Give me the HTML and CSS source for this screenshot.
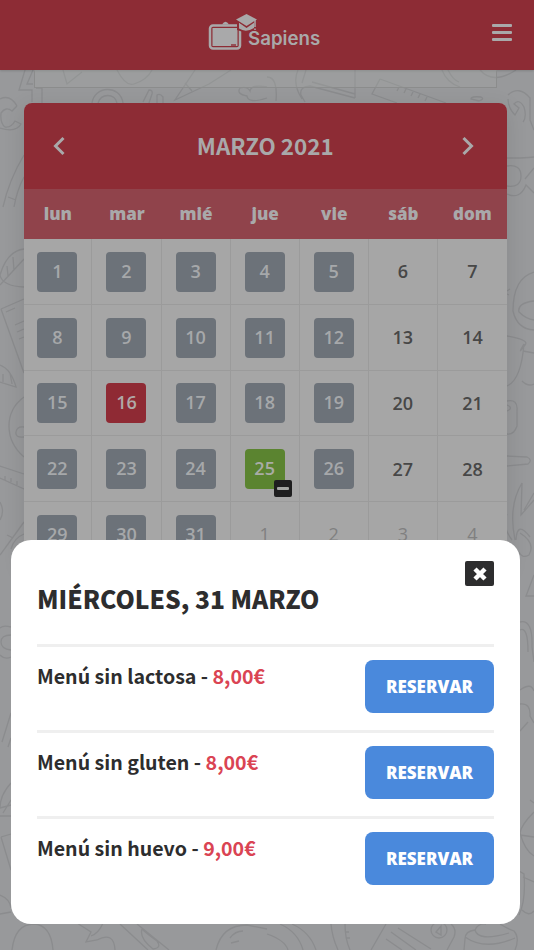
FILE: index.html
```html
<!DOCTYPE html>
<html lang="es">
<head>
  <meta charset="UTF-8">
  <meta name="viewport" content="width=device-width, initial-scale=1">
  <title>Sapiens - Calendario</title>
  <link rel="stylesheet" href="styles.css">
</head>
<body>

  <!-- fondo escolar -->
  <svg class="doodles" width="534" height="950" viewBox="0 0 534 950" aria-hidden="true">
    <path d="M25 70L19 90H32V102M33 70L27 84H33M36 88H42V103M63 70L67 84L82 72M117 70Q126 87 134 84Q147 80 152 70M92 103C94 86 120 84 123 103M98 103C101 93 115 93 117 103M143 102L149 90Q153 90 152 94L149 103M157 103V95Q160 93 163 97V103M195 70L175 100L209 84L231 70M185 83L192 91M267 98Q248 104 247 96Q236 94 240 88Q247 86 250 91Q251 84 267 87"/>
    <path d="M267 77Q278 77 276 101M298 70Q292 83 302 99M306 70L302 83M355 70V98M355 98L310 86Q299 87 301 95L305 102M355 94L312 82M380 79L446 103M380 79L372 94L397 103M388 88v.1M397 91l2-4M404 93l2-4M411 96l2-4M418 98l2-4M425 101l2-4M442 70Q447 83 460 87M448 70Q453 80 459 82M480 70Q493 85 516 70M471 99Q471 96 481 97Q485 99 479 101Z"/>
    <path d="M17 106Q10 94 0 99M17 106L12 111Q6 106 1 113Q0 123 5 127Q11 128 15 121L21 124Q16 133 0 128M24 155Q9 180 3 207M24 177Q17 190 14 207M8 197L16 200"/>
    <path d="M24 249Q7 251 0 275Q2 286 24 287M0 285L24 259M7 266L8 276M13 257L14 270M1 309L24 299M1 309L24 373M6 312L15 308M15 325L24 321M17 332L24 329M19 339L24 337M0 365Q11 369 16 387L0 382M3 374V382M10 373L12 384M24 397Q9 408 9 426T24 457M24 427Q17 426 16 432T24 437M0 466L24 474M0 478L24 489M5 480v-4M11 482v-4M17 485v-4M0 502Q5 511 0 520M24 522L0 555M13 538L7 535M24 534Q14 538 11 549"/>
    <path d="M508 95Q519 85 530 98V120L534 130M508 99Q508 108 515 115L519 108L514 104Q519 98 524 107Q527 117 523 122M507 158H517Q523 158 534 157M507 166Q521 164 521 176T507 186M507 194Q520 200 526 185L534 193M525 179L534 168M507 291l3-2M507 294l2 1M534 272Q513 278 513 311Q517 329 534 330M534 301Q517 303 519 312Q526 319 534 320M507 336Q530 340 525 345Q516 357 524 344Q521 380 507 386M523 351L534 353M522 381Q528 387 534 384M507 401Q518 399 517 410V426Q514 435 507 434M507 405Q514 408 507 411M507 456L527 457Q533 460 528 464L507 466M522 483Q508 506 515 540M522 483L521 515L534 500M524 510L534 493M516 540Q517 520 530 537M512 540Q501 525 507 514"/>
    <path d="M520 533Q536 543 529 555Q522 559 519 552M534 575L526 596H534M520 622Q533 619 532 647L534 662M520 630Q528 626 528 652M520 690Q531 682 534 691M520 704Q531 703 530 716L534 723M528 722L520 731M0 628Q3 625 11 627M11 635Q1 635 1 642T11 650M0 655Q5 660 11 657M11 713L2 742M11 738L8 747M11 783Q0 795 0 808L11 805M0 816H11M11 800L3 813M1 837L11 834M1 837L11 870M0 895Q10 899 11 908M0 914L11 912"/>
    <path d="M12 950Q15 924 34 924Q51 925 53 950M77 923L91 932L86 942L97 940Q114 931 115 950M103 923Q99 933 91 936M120 924L148 950M137 924L169 950M142 929Q139 938 153 949Q162 948 157 941Q146 933 142 929M216 950Q222 925 247 925L267 929M230 938Q235 931 243 931M231 943L239 941"/>
    <path d="M267 934Q285 940 288 950M280 924Q298 932 303 950M292 924Q310 932 316 950M331 924Q332 937 338 950M345 924Q345 939 350 950M345 932h4M346 938h4M386 924L371 950M398 928L431 949M391 932L416 950M386 939L402 950M451 924Q457 929 454 937L447 950M431 930A8 8 0 1 0 447 930A8 8 0 1 0 431 930M436 932L441 926L441 935ZM464 950L465 939Q465 931 475 930Q478 923 486 924M500 924Q508 929 514 931Q520 938 515 950M465 937Q485 951 515 938M475 930Q478 942 509 933M530 800L534 803M534 812Q521 825 520 833Q525 851 534 856M520 835L534 837M519 871L524 874Q526 901 519 915M523 877L534 882M522 910Q529 917 534 911"/>
  </svg>

  <header class="topbar">
    <div class="brand">
      <svg class="brand-icon" width="52" height="40" viewBox="0 0 52 40">
        <rect x="2" y="13.500" width="30" height="23" rx="3" fill="none" stroke="#a9a9aa" stroke-width="2.500"/>
        <rect x="4.500" y="16" width="25" height="18" fill="#a9a9aa"/>
        <path d="M14 12.500Q17.500 7 21 12.500Z" fill="#a9a9aa"/>
        <path d="M23 33H28" stroke="#8d2c35" stroke-width="1.4"/>
        <path class="cap-edge" d="M29 10V18L35 20V10Z"/>
        <path d="M31 10.500V16.500Q38 21 46 16V10L38.500 15Z" fill="#a9a9aa"/>
        <path class="cap-edge" d="M28 8.500L38.500 16L49 8.500Z"/>
        <path d="M28 7.500L38.500 2L49 7.500L38.500 14Z" fill="#a9a9aa"/>
        <path d="M47 8V15M47 16.500V18" stroke="#a9a9aa" stroke-width="1.5"/>
      </svg>
      <span class="brand-name">Sapiens</span>
    </div>
    <div class="menu-btn">
      <span></span>
      <span></span>
      <span></span>
    </div>
  </header>

  <main>
    <div class="prev-card"></div>

    <section class="calendar">
      <div class="month">
        <svg width="14" height="20" viewBox="0 0 14 20"><path d="M11.500 2L3.500 10L11.500 18"/></svg>
        <h1>MARZO 2021</h1>
        <svg width="14" height="20" viewBox="0 0 14 20"><path d="M2.500 2L10.500 10L2.500 18"/></svg>
      </div>
      <div class="grid weekdays">
        <span>lun</span><span>mar</span><span>mié</span><span>jue</span><span>vie</span><span>sáb</span><span>dom</span>
      </div>
      <div class="grid days">
        <div><b>1</b></div><div><b>2</b></div><div><b>3</b></div><div><b>4</b></div><div><b>5</b></div><div>6</div><div>7</div>
        <div><b>8</b></div><div><b>9</b></div><div><b>10</b></div><div><b>11</b></div><div><b>12</b></div><div>13</div><div>14</div>
        <div><b>15</b></div><div><b class="today">16</b></div><div><b>17</b></div><div><b>18</b></div><div><b>19</b></div><div>20</div><div>21</div>
        <div><b>22</b></div><div><b>23</b></div><div><b>24</b></div><div><b class="booked">25<i class="badge"></i></b></div><div><b>26</b></div><div>27</div><div>28</div>
        <div><b>29</b></div><div><b>30</b></div><div><b>31</b></div><div class="other">1</div><div class="other">2</div><div class="other">3</div><div class="other">4</div>
      </div>
    </section>
  </main>

  <!-- ventana de reserva -->
  <div class="modal">
    <div class="close">
      <svg width="16" height="16" viewBox="0 0 16 16"><path d="M3 3L13 13M13 3L3 13"/></svg>
    </div>
    <h2>MIÉRCOLES, 31 MARZO</h2>
    <div class="option">
      <p>Menú sin lactosa - <span class="price">8,00€</span></p>
      <button>RESERVAR</button>
    </div>
    <div class="option">
      <p>Menú sin gluten - <span class="price">8,00€</span></p>
      <button>RESERVAR</button>
    </div>
    <div class="option">
      <p>Menú sin huevo - <span class="price">9,00€</span></p>
      <button>RESERVAR</button>
    </div>
  </div>

</body>
</html>
```
FILE: styles.css
```css
* {
  box-sizing: border-box;
}
body {
  margin: 0;
  height: 950px;
  overflow: hidden;
  position: relative;
  background-color: #98999b;
  font-family: "Open Sans", sans-serif;
}
.doodles {
  position: absolute;
  top: 0;
  left: 0;
  fill: none;
  stroke: #8b8c8e;
  stroke-width: 1.3;
}
.topbar {
  position: relative;
  height: 70px;
  background-color: #8d2c35;
  display: flex;
  align-items: center;
  justify-content: center;
  box-shadow: 0 1px 2px rgba(0, 0, 0, 0.15);
}
.brand {
  display: flex;
  width: 112px;
  height: 40px;
  margin-right: 6px;
  margin-bottom: 6px;
}
.brand-icon {
  flex: none;
}
.cap-edge {
  fill: #8d2c35;
}
.brand-name {
  margin: 15px 0 0 -12px;
  color: #a9a9aa;
  font: 600 18.7px/24px Inter, sans-serif;
}
.menu-btn {
  position: absolute;
  top: 24px;
  right: 22px;
  width: 20px;
  display: grid;
  gap: 4px;
}
.menu-btn span {
  height: 3px;
  border-radius: 1px;
  background-color: #a9a9aa;
}
.prev-card {
  position: relative;
  width: 463px;
  height: 18px;
  margin-left: 34px;
  background-color: rgba(166, 170, 164, 0.3);
  border: 1px solid #8b8c8c;
  border-top: 0;
}
.calendar {
  position: relative;
  width: 482.5px;
  margin: 15px 0 0 24px;
  background-color: #a6a6a6;
  border-radius: 8px 8px 0 0;
  overflow: hidden;
  box-shadow: 0 5px 22px rgba(0, 0, 0, 0.11);
}
.month {
  height: 86px;
  padding: 0 32px 0 28px;
  background-color: #8d2c35;
  display: flex;
  align-items: center;
  justify-content: space-between;
}
.month h1 {
  margin: 0 0 2px 4px;
  color: #a9a9aa;
  font: 700 22.4px/30px "Noto Sans CJK SC", sans-serif;
}
.month svg {
  fill: none;
  stroke: #a9a9aa;
  stroke-width: 3;
}
.grid {
  display: grid;
  grid-template-columns: repeat(7, 69.1px);
  margin-left: -0.7px;
}
.weekdays {
  height: 50px;
  background-color: #90434b;
  color: #a9a9aa;
  font-size: 17px;
  font-weight: 800;
  line-height: 50px;
  text-align: center;
}
.days {
  grid-auto-rows: 65.75px;
}
.days div {
  display: flex;
  align-items: center;
  justify-content: center;
  border-right: 1px solid #9b9b9b;
  border-bottom: 1px solid #9b9b9b;
  color: #474747;
  font-size: 18px;
  font-weight: 600;
}
.days div:nth-child(7n) {
  border-right: 0;
}
.days .other {
  color: #808080;
  font-weight: 400;
}
.days b {
  position: relative;
  width: 40px;
  height: 40px;
  margin-top: 1px;
  border-radius: 4px;
  background-color: #6c7279;
  color: #a6a8aa;
  font-weight: 600;
  line-height: 39px;
  text-align: center;
}
.days .today {
  background-color: #8f2a34;
  color: #b0a8a8;
}
.days .booked {
  background-color: #5b8430;
  color: #a9aca6;
}
.badge {
  position: absolute;
  right: -7px;
  bottom: -8px;
  width: 18px;
  height: 17px;
  border-radius: 2px;
  background-color: #1e1e1f;
}
.badge::after {
  content: "";
  position: absolute;
  top: 7px;
  left: 3px;
  width: 12px;
  height: 3px;
  border-radius: 1px;
  background-color: #a4a6a3;
}
.modal {
  position: absolute;
  top: 539.5px;
  left: 11px;
  width: 508.5px;
  height: 384px;
  padding: 38px 25.5px 0 26px;
  border-radius: 20px;
  background-color: #fff;
}
.modal h2 {
  margin: 0 0 26px;
  color: #2d2d2e;
  font: 900 24.6px/40px "Noto Sans CJK SC", sans-serif;
}
.close {
  position: absolute;
  top: 21.5px;
  right: 25.5px;
  width: 29px;
  height: 25px;
  border-radius: 2px;
  background-color: #2d2d2e;
  display: flex;
  align-items: center;
  justify-content: center;
}
.close svg {
  fill: none;
  stroke: #fff;
  stroke-width: 4.5;
}
.option {
  height: 86px;
  padding-top: 13.5px;
  border-top: 3px solid #efefef;
  display: flex;
  justify-content: space-between;
}
.option p {
  margin: 2px 0 0;
  color: #2d2d2e;
  font: 700 19.6px/28px "Noto Sans CJK SC", sans-serif;
}
.option .price {
  color: #da4453;
}
.option button {
  width: 129px;
  height: 53px;
  padding: 0;
  border: 0;
  border-radius: 8px;
  background-color: #4a89dc;
  color: #fff;
  font: 800 17px/52px "Open Sans", sans-serif;
}
```
